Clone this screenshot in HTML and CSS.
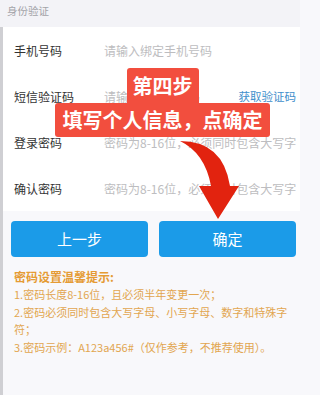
FILE: index.html
```html
<!DOCTYPE html>
<html lang="zh-CN">
<head>
<meta charset="utf-8">
<title>身份验证</title>
<link rel="stylesheet" href="styles.css">
</head>
<body>
<div class="page">
  <div class="header">身份验证</div>
  <div class="main">
    <div class="form">
      <div class="row"><span class="label">手机号码</span><span class="ph">请输入绑定手机号码</span></div>
      <div class="row"><span class="label">短信验证码</span><span class="ph">请输入短信验证码</span><span class="code">获取验证码</span></div>
      <div class="row"><span class="label">登录密码</span><span class="ph">密码为8-16位，必须同时包含大写字母、小写字母、数字和特殊字符</span></div>
      <div class="row"><span class="label">确认密码</span><span class="ph">密码为8-16位，必须同时包含大写字母、小写字母、数字和特殊字符</span></div>
    </div>
    <div class="buttons">
      <div class="btn">上一步</div>
      <div class="btn">确定</div>
    </div>
    <div class="tips">
      <div class="tips-title">密码设置温馨提示:</div>
      <p>1.密码长度8-16位，且必须半年变更一次；</p>
      <p>2.密码必须同时包含大写字母、小写字母、数字和特殊字符；</p>
      <p>3.密码示例：A123a456#（仅作参考，不推荐使用）。</p>
    </div>
  </div>
  <div class="banner">
    <div class="banner-top">第四步</div>
    <div class="banner-bottom">填写个人信息，点确定</div>
  </div>
  <svg class="arrow" width="300" height="395" viewBox="0 0 300 395">
    <path d="M180,141 Q223,141 230,186 L239,186 L218,219 L199,186 L211,186 Q205,153 180,141 Z" fill="#e2230f"/>
  </svg>
</div>
</body>
</html>
```

FILE: styles.css
```css
* { box-sizing: border-box; }
html, body {
  margin: 0;
  padding: 0;
  background: #f8f8fb;
}
body {
  font-family: "Noto Sans CJK SC", "Noto Sans", sans-serif;
}
.page {
  position: relative;
  width: 300px;
  height: 395px;
  overflow: hidden;
  background: #f8f8fb;
}
.header {
  height: 27px;
  padding: 2px 0 0 7px;
  font-size: 10.5px;
  line-height: 17px;
  color: #a3a3a8;
  background: #f3f3f7;
}
.main {
  border-left: 3px solid #cfcfd3;
  height: 368px;
}
.form {
  background: #ffffff;
}
.row {
  display: flex;
  align-items: center;
  height: 46px;
  padding: 0 4px 0 11px;
  font-size: 12px;
  white-space: nowrap;
}
.label {
  flex: none;
  width: 90px;
  color: #333333;
}
.ph {
  flex: 1;
  min-width: 0;
  overflow: hidden;
  color: #bdbdc0;
}
.code {
  flex: none;
  font-size: 11.5px;
  color: #3f8fcc;
  margin-left: 6px;
}
.buttons {
  display: flex;
  gap: 11px;
  padding: 10px 4px 0 8px;
}
.btn {
  flex: 1;
  height: 36px;
  border-radius: 4px;
  background: #1b9be8;
  color: #ffffff;
  font-size: 15px;
  line-height: 36px;
  text-align: center;
}
.tips {
  padding: 11px 9px 0 11px;
  font-size: 11px;
  line-height: 17.6px;
  color: #e2a650;
}
.tips-title {
  font-size: 12px;
  font-weight: 700;
  line-height: 18px;
  color: #e59b34;
}
.tips p {
  margin: 0;
}
.banner {
  position: absolute;
  left: 55px;
  top: 68px;
  width: 215px;
  display: flex;
  flex-direction: column;
  align-items: center;
  color: #ffffff;
  font-weight: 700;
  font-size: 20px;
}
.banner-top {
  width: 72px;
  height: 35px;
  line-height: 35px;
  text-align: center;
  background: #f24e3e;
  border-radius: 3px 3px 0 0;
}
.banner-bottom {
  width: 215px;
  height: 34px;
  line-height: 33px;
  text-align: center;
  background: #f24e3e;
  border-radius: 3px;
}
.arrow {
  position: absolute;
  left: 0;
  top: 0;
  pointer-events: none;
}
```
